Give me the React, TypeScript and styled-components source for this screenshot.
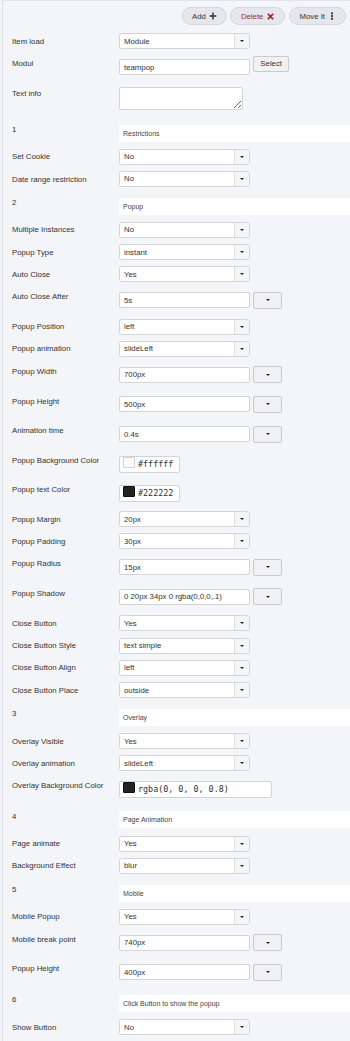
import React from 'react';
import styled, { createGlobalStyle } from 'styled-components';
import { FaPlus, FaTimes, FaEllipsisV } from 'react-icons/fa';

type Field =
  | { kind: 'select'; label: string; value: string }
  | { kind: 'input'; label: string; value: string }
  | { kind: 'color'; label: string; value: string; swatch: string; width: number }
  | { kind: 'section'; label: string; title: string };

const fields: Field[] = [
  { kind: 'section', label: '1', title: 'Restrictions' },
  { kind: 'select', label: 'Set Cookie', value: 'No' },
  { kind: 'select', label: 'Date range restriction', value: 'No' },
  { kind: 'section', label: '2', title: 'Popup' },
  { kind: 'select', label: 'Multiple Instances', value: 'No' },
  { kind: 'select', label: 'Popup Type', value: 'instant' },
  { kind: 'select', label: 'Auto Close', value: 'Yes' },
  { kind: 'input', label: 'Auto Close After', value: '5s' },
  { kind: 'select', label: 'Popup Position', value: 'left' },
  { kind: 'select', label: 'Popup animation', value: 'slideLeft' },
  { kind: 'input', label: 'Popup Width', value: '700px' },
  { kind: 'input', label: 'Popup Height', value: '500px' },
  { kind: 'input', label: 'Animation time', value: '0.4s' },
  { kind: 'color', label: 'Popup Background Color', value: '#ffffff', swatch: '#ffffff', width: 61 },
  { kind: 'color', label: 'Popup text Color', value: '#222222', swatch: '#222222', width: 61 },
  { kind: 'select', label: 'Popup Margin', value: '20px' },
  { kind: 'select', label: 'Popup Padding', value: '30px' },
  { kind: 'input', label: 'Popup Radius', value: '15px' },
  { kind: 'input', label: 'Popup Shadow', value: '0 20px 34px 0 rgba(0,0,0,.1)' },
  { kind: 'select', label: 'Close Button', value: 'Yes' },
  { kind: 'select', label: 'Close Button Style', value: 'text simple' },
  { kind: 'select', label: 'Close Button Align', value: 'left' },
  { kind: 'select', label: 'Close Button Place', value: 'outside' },
  { kind: 'section', label: '3', title: 'Overlay' },
  { kind: 'select', label: 'Overlay Visible', value: 'Yes' },
  { kind: 'select', label: 'Overlay animation', value: 'slideLeft' },
  { kind: 'color', label: 'Overlay Background Color', value: 'rgba(0, 0, 0, 0.8)', swatch: '#222222', width: 153.4 },
  { kind: 'section', label: '4', title: 'Page Animation' },
  { kind: 'select', label: 'Page animate', value: 'Yes' },
  { kind: 'select', label: 'Background Effect', value: 'blur' },
  { kind: 'section', label: '5', title: 'Mobile' },
  { kind: 'select', label: 'Mobile Popup', value: 'Yes' },
  { kind: 'input', label: 'Mobile break point', value: '740px' },
  { kind: 'input', label: 'Popup Height', value: '400px' },
  { kind: 'section', label: '6', title: 'Click Button to show the popup' },
  { kind: 'select', label: 'Show Button', value: 'No' },
];

// spacing above the control / below the row, per kind of row
const spacing = {
  select: { pre: 0, post: 0 },
  input: { pre: 3.5, post: 3.5 },
  color: { pre: 3, post: 3 },
  section: { pre: 4.5, post: 0.8 },
};

const Select = ({ value }: { value: string }) => (
  <SelectBox>
    <FieldText>{value}</FieldText>
    <ArrowBox>
      <Caret />
    </ArrowBox>
  </SelectBox>
);

const App = () => {
  return (
    <>
      <GlobalStyle />
      <Page>
        <Toolbar>
          <PillButton type="button">
            Add <FaPlus size={8} />
          </PillButton>
          <PillButton type="button" $danger>
            Delete <FaTimes size={9} color="#b3221f" />
          </PillButton>
          <PillButton type="button">
            Move It <FaEllipsisV size={8} />
          </PillButton>
        </Toolbar>

        <Row>
          <Label>Item load</Label>
          <Control>
            <Select value="Module" />
          </Control>
        </Row>

        <Row $post={3.5}>
          <Label>Modul</Label>
          <Control $pre={3.7}>
            <TextBox>
              <FieldText>teampop</FieldText>
            </TextBox>
            <PlainButton type="button">Select</PlainButton>
          </Control>
        </Row>

        <Row $post={3.5}>
          <Label>Text info</Label>
          <Control $pre={2.2}>
            <TextArea />
          </Control>
        </Row>

        {fields.map((f, i) => {
          const sp = spacing[f.kind];
          if (f.kind === 'section') {
            return (
              <Row key={i} $post={sp.post}>
                <Label $section>{f.label}</Label>
                <Control $pre={sp.pre}>
                  <SectionBar>{f.title}</SectionBar>
                </Control>
              </Row>
            );
          }
          return (
            <Row key={i} $post={sp.post}>
              <Label>{f.label}</Label>
              <Control $pre={sp.pre}>
                {f.kind === 'select' && <Select value={f.value} />}
                {f.kind === 'input' && (
                  <>
                    <TextBox>
                      <FieldText>{f.value}</FieldText>
                    </TextBox>
                    <DropButton type="button">
                      <Caret $big />
                    </DropButton>
                  </>
                )}
                {f.kind === 'color' && (
                  <ColorBox style={{ width: f.width }}>
                    <Swatch $color={f.swatch} />
                    <ColorText>{f.value}</ColorText>
                  </ColorBox>
                )}
              </Control>
            </Row>
          );
        })}
      </Page>
    </>
  );
};

export default App;

const GlobalStyle = createGlobalStyle`
  html, body {
    margin: 0;
    padding: 0;
    background: #f4f5f8;
  }
  body {
    font-family: 'Liberation Sans', Arial, sans-serif;
    color: #333;
  }
  * {
    box-sizing: border-box;
  }
`;

const Page = styled.div`
  margin-left: 2px;
  border-left: 1px solid #dfe0e5;
  border-top: 1px solid #e3e4e9;
  padding-left: 9px;
  min-height: 1041px;
`;

const Toolbar = styled.div`
  display: flex;
  justify-content: flex-end;
  gap: 3.5px;
  padding: 6.3px 4px 0 0;
  margin-bottom: 8.3px;
`;

const PillButton = styled.button<{ $danger?: boolean }>`
  display: inline-flex;
  align-items: center;
  gap: 3px;
  height: 17.7px;
  padding: 0 9px 0 9.5px;
  border: 1px solid #d6d7dd;
  border-radius: 9px;
  background: #e6e7ec;
  font-family: 'Liberation Sans', Arial, sans-serif;
  font-size: 7.8px;
  color: ${({ $danger }) => ($danger ? '#9a2b2b' : '#333')};
  cursor: pointer;
`;

const Row = styled.div<{ $post?: number }>`
  display: flex;
  align-items: flex-start;
  margin-bottom: 6.3px;
  padding-bottom: ${({ $post }) => $post ?? 0}px;
`;

const Label = styled.div<{ $section?: boolean }>`
  position: relative;
  top: 0.6px;
  flex: 0 0 107px;
  font-size: 7.8px;
  line-height: ${({ $section }) => ($section ? '18.4px' : '16px')};
  color: #333;
`;

const Control = styled.div<{ $pre?: number }>`
  flex: 1;
  display: flex;
  align-items: flex-start;
  margin-top: ${({ $pre }) => $pre ?? 0}px;
`;

const SelectBox = styled.div`
  display: flex;
  align-items: stretch;
  width: 131.4px;
  height: 16px;
  border: 1px solid #d3d4d8;
  border-radius: 2.5px;
  background: #fff;
  overflow: hidden;
`;

const FieldText = styled.span`
  flex: 1;
  display: flex;
  align-items: center;
  padding-left: 4px;
  font-size: 7.8px;
  color: #333;
  white-space: nowrap;
  overflow: hidden;
`;

const ArrowBox = styled.span`
  flex: 0 0 15px;
  display: flex;
  align-items: center;
  justify-content: center;
  border-left: 1px solid #dcdde1;
  background: #f5f5f6;
`;

const Caret = styled.span<{ $big?: boolean }>`
  width: 0;
  height: 0;
  border-left: ${({ $big }) => ($big ? 2.5 : 2)}px solid transparent;
  border-right: ${({ $big }) => ($big ? 2.5 : 2)}px solid transparent;
  border-top: ${({ $big }) => ($big ? 2.6 : 2.2)}px solid #222;
`;

const TextBox = styled.div`
  display: flex;
  width: 131.4px;
  height: 16px;
  border: 1px solid #d3d4d8;
  border-radius: 2px;
  background: #fff;
`;

const DropButton = styled.button`
  display: flex;
  align-items: center;
  justify-content: center;
  width: 29.4px;
  height: 17px;
  margin: -0.5px 0 0 2.6px;
  padding: 0;
  border: 1px solid #c9cacf;
  border-radius: 2px;
  background: #f1f1f3;
  cursor: pointer;
`;

const PlainButton = styled.button`
  width: 35.6px;
  height: 15.7px;
  margin: -3.3px 0 0 3px;
  padding: 0;
  border: 1px solid #c9cacf;
  border-radius: 2px;
  background: #f1f1f3;
  font-family: 'Liberation Sans', Arial, sans-serif;
  font-size: 7.8px;
  color: #333;
  cursor: pointer;
`;

const TextArea = styled.textarea`
  display: block;
  width: 124.4px;
  height: 23px;
  border: 1px solid #d3d4d8;
  border-radius: 2px;
  background: #fff;
  resize: vertical;
  font-family: 'Liberation Sans', Arial, sans-serif;
  font-size: 7.8px;
`;

const SectionBar = styled.div`
  flex: 1;
  display: flex;
  align-items: center;
  height: 17px;
  padding-left: 4px;
  background: #fff;
  font-size: 7px;
  color: #444;
`;

const ColorBox = styled.div`
  display: flex;
  align-items: center;
  height: 17px;
  padding: 0 3px;
  border: 1px solid #d3d4d8;
  border-radius: 2px;
  background: #fff;
`;

const Swatch = styled.span<{ $color: string }>`
  align-self: flex-start;
  flex: 0 0 11.5px;
  height: 11.5px;
  border: 1px solid ${({ $color }) => ($color === '#ffffff' ? '#d0d0d0' : '#111')};
  border-radius: 1px;
  background: ${({ $color }) => $color};
`;

const ColorText = styled.span`
  margin-left: 3.5px;
  font-family: 'DejaVu Sans Mono', 'Liberation Mono', monospace;
  font-size: 8.4px;
  color: #333;
  white-space: nowrap;
`;
